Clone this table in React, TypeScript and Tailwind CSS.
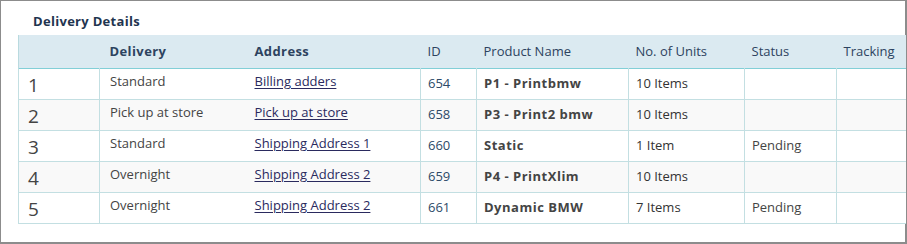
const rows = [
  { n: 1, delivery: "Standard", address: "Billing adders", id: "654", product: "P1 - Printbmw", units: "10 Items", status: "" },
  { n: 2, delivery: "Pick up at store", address: "Pick up at store", id: "658", product: "P3 - Print2 bmw", units: "10 Items", status: "" },
  { n: 3, delivery: "Standard", address: "Shipping Address 1", id: "660", product: "Static", units: "1 Item", status: "Pending" },
  { n: 4, delivery: "Overnight", address: "Shipping Address 2", id: "659", product: "P4 - PrintXlim", units: "10 Items", status: "" },
  { n: 5, delivery: "Overnight", address: "Shipping Address 2", id: "661", product: "Dynamic BMW", units: "7 Items", status: "Pending" },
];

export default function App() {
  return (
    <div
      className="w-[907px] h-[244px] bg-white border-l border-t border-r-2 border-b-2 border-[#8c8c8c] text-[#444]"
      style={{ fontFamily: '"Open Sans", "DejaVu Sans", sans-serif' }}
    >
      <h3 className="pl-[32px] pt-[11px] h-[34px] text-[13px] font-bold tracking-[0.3px] text-[#1f3550]">Delivery Details</h3>
      <table className="ml-[17px] w-[887px] table-fixed border-collapse text-[13px]">
        <colgroup>
          <col className="w-[81px]" />
          <col className="w-[148px]" />
          <col className="w-[173px]" />
          <col className="w-[56px]" />
          <col className="w-[152px]" />
          <col className="w-[116px]" />
          <col className="w-[92px]" />
          <col className="w-[69px]" />
        </colgroup>
        <thead>
          <tr className="h-[33px] bg-[#dbeaf1] border-b border-b-[#82cfd7] text-[#2d4360] text-left">
            <th className="border-l border-[#b9dadf]" />
            <th className="pl-[10px] pt-[1px] font-bold tracking-[0.4px]">Delivery</th>
            <th className="pl-[7px] pt-[1px] font-bold tracking-[0.4px]">Address</th>
            <th className="pl-[7px] pt-[1px] font-normal">ID</th>
            <th className="pl-[7px] pt-[1px] font-normal">Product Name</th>
            <th className="pl-[7px] pt-[1px] font-normal">No. of Units</th>
            <th className="pl-[7px] pt-[1px] font-normal">Status</th>
            <th className="pl-[7px] pt-[1px] font-normal">Tracking</th>
          </tr>
        </thead>
        <tbody>
          {rows.map((r) => (
            <tr key={r.n} className={`h-[31px] border-b border-[#c3dfe2] ${r.n % 2 === 0 ? "bg-[#f9f9f9]" : "bg-white"}`}>
              <td className="border-l border-r border-[#c3dfe2] pl-[9px] pt-[3px] text-[19px] leading-none text-[#444]">{r.n}</td>
              <td className="pl-[10px] pb-[4px] text-[#444]">{r.delivery}</td>
              <td className="pl-[7px] pb-[4px]">
                <a href="#" className="underline underline-offset-2 text-[#2a2a5e]">{r.address}</a>
              </td>
              <td className="border-l border-r border-[#c3dfe2] pl-[7px] text-[#2d4a68]">{r.id}</td>
              <td className="border-r border-[#c3dfe2] pl-[7px] font-bold tracking-[0.5px] text-[#444]">{r.product}</td>
              <td className="border-r border-[#c3dfe2] pl-[7px] text-[#333]">{r.units}</td>
              <td className="border-r border-[#c3dfe2] pl-[7px] text-[#444]">{r.status}</td>
              <td className="pl-[7px]" />
            </tr>
          ))}
        </tbody>
      </table>
    </div>
  );
}
